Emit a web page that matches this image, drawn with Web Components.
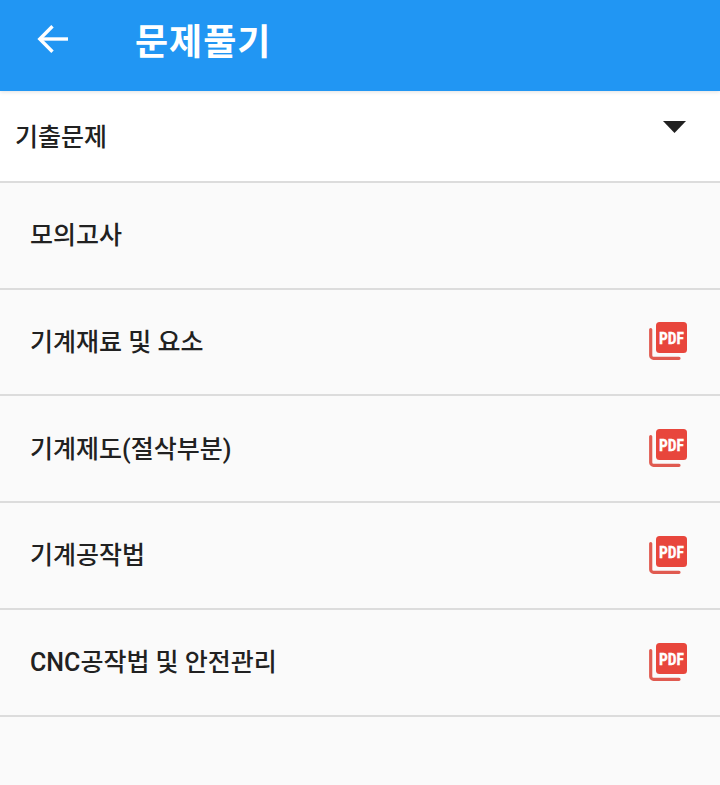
<!DOCTYPE html>
<html lang="ko">
<head>
<meta charset="utf-8">
<title>문제풀기</title>
<style>
  html, body { margin: 0; padding: 0; height: 100%; }
  body {
    background: #fafafa;
    font-family: Roboto, "Noto Sans CJK KR", sans-serif;
    overflow: hidden;
  }
</style>
</head>
<body>
<app-bar>문제풀기</app-bar>
<category-select>기출문제</category-select>
<subject-row>모의고사</subject-row>
<subject-row pdf>기계재료 및 요소</subject-row>
<subject-row pdf>기계제도(절삭부분)</subject-row>
<subject-row pdf>기계공작법</subject-row>
<subject-row pdf>CNC공작법 및 안전관리</subject-row>

<script>
  // Blue top bar with a back arrow and the screen title.
  class AppBar extends HTMLElement {
    constructor() {
      super();
      this.attachShadow({ mode: 'open' }).innerHTML = `
        <style>
          :host {
            display: flex; align-items: center; box-sizing: border-box;
            height: 91px; padding: 0 0 14px 37px; gap: 67px;
            background: #2196f3; color: #fff;
            box-shadow: 0 1px 4px rgba(0,0,0,.12);
            position: relative;
            font: 700 36px Roboto, "Noto Sans CJK KR", sans-serif;
            letter-spacing: 1px;
          }
          svg { width: 31px; height: 30px; display: block; flex: none; }
        </style>
        <svg viewBox="0 0 31 30" fill="none" stroke="#fff" stroke-width="3.4">
          <path d="M31 15H3"/>
          <path d="M15.5 2.2 2.8 15l12.7 12.8"/>
        </svg>
        <slot></slot>`;
    }
  }

  // White dropdown row with a filled caret on the right.
  class CategorySelect extends HTMLElement {
    constructor() {
      super();
      this.attachShadow({ mode: 'open' }).innerHTML = `
        <style>
          :host {
            display: flex; align-items: center; justify-content: space-between;
            box-sizing: border-box; height: 91.8px;
            padding: 0 34px 0 15px;
            background: #fff; color: #212121;
            border-bottom: 2px solid #dcdcdc;
            font: 500 25px Roboto, "Noto Sans CJK KR", sans-serif;
          }
          .label { padding-bottom: 2px; }
          svg { width: 23px; height: 12px; display: block; margin-bottom: 17px; }
        </style>
        <span class="label"><slot></slot></span>
        <svg viewBox="0 0 23 12"><path d="M0 0h23L11.5 12z" fill="#212121"/></svg>`;
    }
  }

  // One subject in the list; the pdf attribute shows the document icon.
  class SubjectRow extends HTMLElement {
    constructor() {
      super();
      this.attachShadow({ mode: 'open' }).innerHTML = `
        <style>
          :host {
            display: flex; align-items: center; justify-content: space-between;
            box-sizing: border-box; height: 106.75px;
            padding: 0 33px 0 30px;
            color: #212121;
            border-bottom: 2px solid #dcdcdc;
            font: 500 25px Roboto, "Noto Sans CJK KR", sans-serif;
          }
          .label { padding-bottom: 4px; }
          pdf-icon { display: none; }
          :host([pdf]) pdf-icon { display: block; }
        </style>
        <span class="label"><slot></slot></span>
        <pdf-icon></pdf-icon>`;
    }
  }

  // Stacked-pages PDF badge.
  class PdfIcon extends HTMLElement {
    constructor() {
      super();
      this.attachShadow({ mode: 'open' }).innerHTML = `
        <style>
          :host { display: block; width: 38px; height: 38px; margin-bottom: 1px; }
          svg { display: block; }
          text { font: 700 16px "Roboto Condensed", Roboto, "Liberation Sans", sans-serif; fill: #fff; stroke: #fff; stroke-width: .3px; }
        </style>
        <svg width="38" height="38" viewBox="0 0 38 38">
          <rect x="7" y="0" width="31" height="31" rx="3.5" fill="#e8463c"/>
          <text x="10" y="21.5" textLength="25" lengthAdjust="spacingAndGlyphs">PDF</text>
          <path d="M1.7 7.5V33.5a2.8 2.8 0 0 0 2.8 2.8H30" fill="none" stroke="#e05a50" stroke-width="3.2" stroke-linecap="round"/>
        </svg>`;
    }
  }

  customElements.define('pdf-icon', PdfIcon);
  customElements.define('app-bar', AppBar);
  customElements.define('category-select', CategorySelect);
  customElements.define('subject-row', SubjectRow);
</script>
</body>
</html>
